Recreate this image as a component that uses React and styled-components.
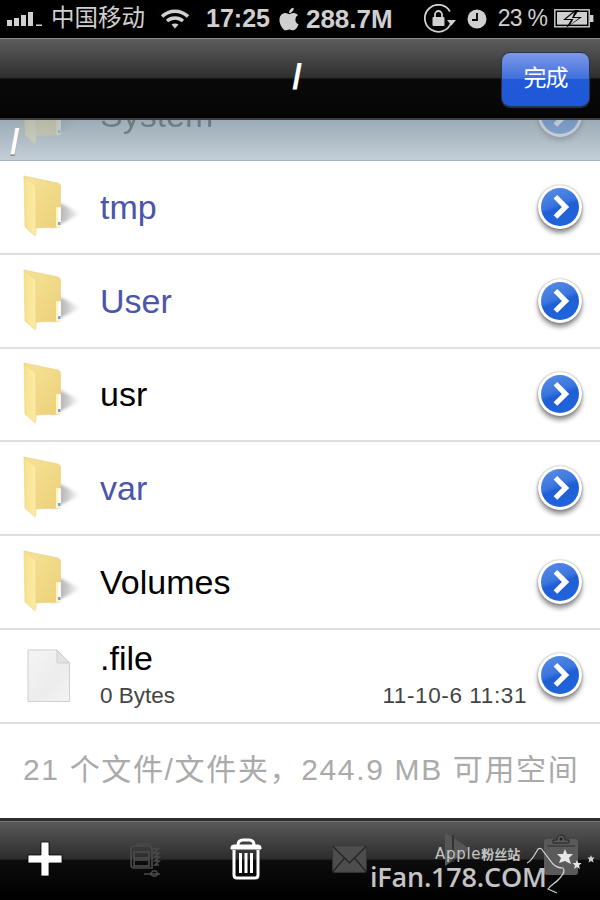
import React from 'react';
import styled, { createGlobalStyle } from 'styled-components';
import { FaApple } from 'react-icons/fa';

const Global = createGlobalStyle`
  html, body { margin: 0; padding: 0; width: 600px; height: 900px; overflow: hidden; background: #fff; }
  * { box-sizing: border-box; }
`;
const Sans = `"Liberation Sans", "Noto Sans CJK SC", sans-serif`;

const Screen = styled.div`
  width: 600px; height: 900px; display: flex; flex-direction: column; overflow: hidden; font-family: ${Sans}; position: relative;
`;
const StatusBar = styled.div`
  height: 38px; flex: none; background: #000; color: #cfcfcf; display: flex; align-items: center; padding-bottom: 1px;
`;
const StatusItem = styled.div`
  margin-left: ${p => p.$ml}px; display: flex; align-items: center; flex: none;
  font-size: ${p => p.$size || 26}px; font-weight: ${p => p.$bold ? 700 : 400}; line-height: 1; letter-spacing: ${p => p.$ls || 0}px;
`;
const NavBar = styled.div`
  height: 82px; flex: none; position: relative; display: flex; align-items: center; justify-content: center; z-index: 2;
  border-top: 1px solid #8a8a8a; border-bottom: 2px solid #3c3c3c;
  background: linear-gradient(#5c5c5c 0%, #303030 48%, #262626 49.5%, #090909 50.5%, #050505 100%);
`;
const NavTitle = styled.div`
  color: #fff; font-size: 35px; font-weight: 700; margin-top: -5px; margin-left: -6px; line-height: 1;
`;
const DoneButton = styled.div`
  position: absolute; left: 501px; top: 13px; width: 89px; height: 55px; border-radius: 9px; color: #fff; font-size: 23px;
  display: flex; align-items: center; justify-content: center; letter-spacing: -1px; padding-bottom: 7px;
  border: 1px solid #28324a; box-shadow: 0 1px 0 rgba(255,255,255,.18);
  background: linear-gradient(#7d9ae8 0%, #3f6edb 49%, #1f5ad8 50%, #2058d6 100%);
`;
const PathBar = styled.div`
  height: 41px; flex: none; position: relative; overflow: hidden;
  background: linear-gradient(#9cacb6, #c4ced6);
  border-bottom: 1px solid #aab4bd;
`;
const Ghost = styled.div`
  position: absolute; left: 0; right: 0; top: -52px; height: 94px; opacity: .3;
  display: flex; align-items: center;
`;
const PathLabel = styled.div`
  position: absolute; left: 10px; top: 4px; color: #fff; font-size: 35px; font-weight: 700; line-height: 1;
  text-shadow: 0 1px 0 #555;
`;
const List = styled.div`display: flex; flex-direction: column; flex: none;`;
const Row = styled.div`
  height: 93.75px; flex: none; display: flex; align-items: center; position: relative; border-bottom: 2px solid #dedede; background: #fff;
`;
const IconBox = styled.div`
  width: 100px; flex: none; display: flex; align-items: center; padding-left: ${p => p.$pl || 22}px;
`;
const Name = styled.div`
  flex: 1; font-size: 34px; line-height: 1; color: ${p => p.$link ? '#4a55ab' : '#000'};
`;
const FileName = styled(Name)`
  flex: none;
`;
const FileInfo = styled.div`
  flex: 1; display: flex; flex-direction: column; height: 100%; padding-top: 11px; padding-right: 11px;
`;
const FileMeta = styled.div`
  display: flex; justify-content: space-between; margin-top: 10px; font-size: 22.5px; line-height: 1; color: #444;
`;
const DateText = styled.span`letter-spacing: .6px;`;
const Disclosure = styled.div`
  width: 44px; height: 44px; border-radius: 50%; flex: none; margin-right: 18px; margin-bottom: ${p => p.$mb || 0}px;
  background: #fff; padding: 3px; box-shadow: 0 4px 5px rgba(0,0,0,.45), 0 0 2px rgba(0,0,0,.4);
`;
const DisclosureInner = styled.div`
  width: 38px; height: 38px; border-radius: 50%; display: flex; align-items: center; justify-content: center;
  background: linear-gradient(160deg, #5b8de6 0%, #3b76de 42%, #1f5fd6 52%, #2066dc 100%);
`;
const Footer = styled.div`
  flex: none; height: 94px; display: flex; align-items: center; padding-left: 23px; color: #aaa; font-size: 30px; letter-spacing: 1.65px; white-space: nowrap; background: #fff; padding-bottom: 8px;
`;
const Toolbar = styled.div`
  flex: 1; position: relative; display: flex; align-items: center; padding-bottom: 2px;
  border-top: 3px solid #2e2e2e; box-shadow: inset 0 1px 0 #777;
  background: linear-gradient(#5b5b5b 0%, #2c2c2c 48%, #0c0c0c 50%, #000 100%);
`;
const Tool = styled.div`
  margin-left: ${p => p.$ml}px; flex: none; display: flex; margin-top: ${p => p.$mt || 0}px;
`;
const Watermark = styled.div`
  position: absolute; left: 370px; top: 25px; width: 230px; height: 55px; color: #c4c4c4; pointer-events: none;
`;
const MarkTop = styled.div`
  position: absolute; left: 65px; top: 0; font-family: "DejaVu Sans", "Noto Sans CJK SC", sans-serif; font-size: 15px; line-height: 17px; white-space: nowrap; letter-spacing: .7px;
`;
const MarkTopCjk = styled.span`font-size: 13px; font-weight: 700; letter-spacing: 0;`;
const MarkMain = styled.div`
  position: absolute; left: 0; top: 15px; font-family: "Open Sans", sans-serif; font-weight: 600; font-size: 27px; line-height: 1.2; white-space: nowrap; letter-spacing: -.2px;
`;
const MarkDeco = styled.svg`position: absolute; left: 130px; top: -2px;`;

const Signal = () => (
  <svg width="36" height="14" viewBox="0 0 36 14" fill="#d0d0d0">
    <rect x="0" y="8" width="5" height="6" /><rect x="7" y="6" width="5" height="8" /><rect x="14" y="3" width="5" height="11" /><rect x="21" y="0" width="5" height="14" /><rect x="29" y="12.5" width="6" height="1.5" />
  </svg>
);
const Wifi = () => (
  <svg width="30" height="21" viewBox="0 0 30 21" fill="none" stroke="#d0d0d0" strokeWidth="3.4">
    <path d="M2 8.5 C9.5 1.5 20.5 1.5 28 8.5" /><path d="M7 13 C11.5 9 18.5 9 23 13" />
    <path d="M11.5 16.6 L15 20.5 L18.5 16.6 C16.5 15 13.5 15 11.5 16.6Z" fill="#d0d0d0" stroke="none" />
  </svg>
);
const RotLock = () => (
  <svg width="33" height="30" viewBox="0 0 33 30" fill="none" stroke="#d0d0d0">
    <path d="M27 19 A13.5 13.5 0 1 1 26 7.5" strokeWidth="1.8" />
    <path d="M23 16 L32 16 L27.5 21.5Z" fill="#d0d0d0" stroke="none" />
    <path d="M11 13 V10.5 A3.5 3.5 0 0 1 18 10.5 V13" strokeWidth="1.8" />
    <rect x="8.5" y="13" width="12" height="9" rx="1" fill="#d0d0d0" stroke="none" />
  </svg>
);
const ClockIcon = () => (
  <svg width="20" height="20" viewBox="0 0 20 20">
    <circle cx="10" cy="10" r="9.5" fill="#d0d0d0" />
    <path d="M10 4 V11 H5" fill="none" stroke="#000" strokeWidth="1.8" />
  </svg>
);
const Battery = () => (
  <svg width="40" height="20" viewBox="0 0 40 20">
    <rect x=".8" y=".8" width="34.4" height="17" fill="none" stroke="#d0d0d0" strokeWidth="1.4" />
    <rect x="3" y="3" width="30" height="12.6" fill="#cfcfcf" />
    <rect x="36" y="6" width="3.4" height="7" fill="#d0d0d0" />
    <path d="M21 1 L9 11 H17 L12 19 L28 8 H20 L25 1Z" fill="#000" />
    <path d="M20.5 3 L12 10 H19.5 L16 16 L25 9 H18 Z" fill="#d0d0d0" />
  </svg>
);
const Folder = () => (
  <svg width="60" height="64" viewBox="0 0 60 64">
    <defs>
      <linearGradient id="fb" x1="0" y1="0" x2="1" y2="1"><stop offset="0" stopColor="#f6e39a" /><stop offset="1" stopColor="#ecd077" /></linearGradient>
      <linearGradient id="ff" x1="0" y1="0" x2="1" y2="0"><stop offset="0" stopColor="#f7e189" /><stop offset="1" stopColor="#fbeca8" /></linearGradient>
      <linearGradient id="fs" x1="0" y1="0" x2="1" y2="0"><stop offset="0" stopColor="#666" stopOpacity=".7" /><stop offset=".55" stopColor="#888" stopOpacity=".42" /><stop offset="1" stopColor="#aaa" stopOpacity="0" /></linearGradient>
      <filter id="fblur" x="-30%" y="-30%" width="160%" height="160%"><feGaussianBlur stdDeviation="1.6" /></filter>
    </defs>
    <path d="M30 53 L38 28 L59 39 Z" fill="url(#fs)" filter="url(#fblur)" />
    <path d="M2 1 L36 8 Q38.5 9 38.5 11 V52 L14 53 Z" fill="url(#fb)" stroke="#e6cf85" strokeWidth=".6" />
    <rect x="34" y="32" width="5" height="20" fill="#fdf3c4" />
    <rect x="36" y="33" width="2.5" height="14" fill="#fff" />
    <rect x="36" y="47" width="2.5" height="3" fill="#6ea6d8" />
    <path d="M2 1 L13 10 Q14 11 14 13 V58 L13 61 L3 52 Z" fill="url(#ff)" stroke="#e9d182" strokeWidth=".6" />
  </svg>
);
const Chevron = () => (
  <svg width="22" height="26" viewBox="0 0 22 26">
    <path d="M4 4 L8 0 L21 13 L8 26 L4 22 L13 13Z" transform="scale(.92) translate(1 1)" fill="#fff" />
  </svg>
);
const FileIcon = () => (
  <svg width="44" height="54" viewBox="0 0 44 54">
    <defs><linearGradient id="pg" x1="0" y1="0" x2="1" y2="1"><stop offset="0" stopColor="#f5f5f5" /><stop offset=".6" stopColor="#ececec" /><stop offset="1" stopColor="#f4f4f4" /></linearGradient></defs>
    <path d="M1 1 H30 L42.5 14 V52.5 H1Z" fill="url(#pg)" stroke="#cfcfcf" />
    <path d="M30 1 V14 H42.5Z" fill="#e2e2e2" stroke="#cfcfcf" />
  </svg>
);

const Plus = () => (
  <svg width="36" height="36" viewBox="0 0 36 36"><path d="M14 1 H22 V14 H35 V22 H22 V35 H14 V22 H1 V14 H14Z" fill="#fff" stroke="#000" strokeWidth=".8" /></svg>
);
const ArchiveIcon = () => (
  <svg width="34" height="36" viewBox="0 0 34 36" fill="none" stroke="#4a4a4a" strokeWidth="1.7">
    <path d="M3 8 Q3 5 7 5 H21 Q24 5 24 8 V27 H6 Q3 27 3 24Z" />
    <rect x="6" y="11" width="15" height="6" /><rect x="6" y="19" width="15" height="6" />
    <path d="M8 3 H24 M25 8 H30 L26 12 H31 L27 16 H31 L27 20 H31 L27 24 H31" />
    <path d="M16 33 H32 M22 33 L25 30 H28 L30 33 L28 35 H25 Z" strokeWidth="1.4" />
  </svg>
);
const Trash = () => (
  <svg width="32" height="42" viewBox="0 0 32 42" fill="none" stroke="#fff">
    <path d="M8 7 Q8 2 13 2 H19 Q24 2 24 7" strokeWidth="3" />
    <path d="M1 9.5 Q1 7 4 7 H28 Q31 7 31 9.5 V11 H1Z" fill="#fff" strokeWidth="1" />
    <path d="M4 12 V37 Q4 40 7 40 H25 Q28 40 28 37 V12" strokeWidth="3" />
    <path d="M10.5 15 V35 M16 15 V35 M21.5 15 V35" strokeWidth="3" />
  </svg>
);
const Mail = () => (
  <svg width="35" height="28" viewBox="0 0 35 28">
    <rect x=".7" y=".7" width="33.6" height="26.6" rx="1.5" fill="#4d4d4d" stroke="#393939" />
    <path d="M1 1.5 L17.5 18 L34 1.5 M1 26.5 L12.5 13 M34 26.5 L22.5 13" fill="none" stroke="#222" strokeWidth="1.2" />
  </svg>
);
const Speaker = () => (
  <svg width="28" height="36" viewBox="0 0 28 36">
    <path d="M2 1 L27 18 L2 35Z" fill="#565656" />
    <path d="M10 4 L10 31" stroke="#333" strokeWidth="2" />
  </svg>
);
const Clipboard = () => (
  <svg width="36" height="42" viewBox="0 0 36 42">
    <rect x="1" y="5" width="34" height="36" rx="3" fill="#5a5a5a" />
    <path d="M10 9 V6 H14 Q14 1 18 1 Q22 1 22 6 H26 V9Z" fill="#5a5a5a" stroke="#222" strokeWidth="1" />
    <circle cx="18" cy="5" r="1.5" fill="#222" />
    <rect x="4" y="11" width="28" height="2" fill="#444" />
  </svg>
);

const rows = [
  { name: 'tmp', link: true },
  { name: 'User', link: true },
  { name: 'usr' },
  { name: 'var', link: true },
  { name: 'Volumes' },
];
const More = ({ mb }) => (
  <Disclosure $mb={mb}>
    <DisclosureInner><Chevron /></DisclosureInner>
  </Disclosure>
);

export default function App() {
  return (
    <Screen>
      <Global />
      <StatusBar>
        <StatusItem $ml={7}><Signal /></StatusItem>
        <StatusItem $ml={8} $size={23.5}>中国移动</StatusItem>
        <StatusItem $ml={15}><Wifi /></StatusItem>
        <StatusItem $ml={16} $bold $size={25}>17:25</StatusItem>
        <StatusItem $ml={6}><FaApple size={26} /></StatusItem>
        <StatusItem $ml={4} $bold>288.7M</StatusItem>
        <StatusItem $ml={31}><RotLock /></StatusItem>
        <StatusItem $ml={10}><ClockIcon /></StatusItem>
        <StatusItem $ml={11} $size={23} $ls={-.7}>23 %</StatusItem>
        <StatusItem $ml={7}><Battery /></StatusItem>
      </StatusBar>
      <NavBar>
        <NavTitle>/</NavTitle>
        <DoneButton>完成</DoneButton>
      </NavBar>
      <PathBar>
        <Ghost>
          <IconBox><Folder /></IconBox>
          <Name>System</Name>
          <More />
        </Ghost>
        <PathLabel>/</PathLabel>
      </PathBar>
      <List>
        {rows.map(r => (
          <Row key={r.name}>
            <IconBox><Folder /></IconBox>
            <Name $link={r.link}>{r.name}</Name>
            <More />
          </Row>
        ))}
        <Row>
          <IconBox $pl={27}><FileIcon /></IconBox>
          <FileInfo>
            <FileName>.file</FileName>
            <FileMeta><span>0 Bytes</span><DateText>11-10-6 11:31</DateText></FileMeta>
          </FileInfo>
          <More mb={2} />
        </Row>
      </List>
      <Footer>21 个文件/文件夹，244.9 MB 可用空间</Footer>
      <Toolbar>
        <Tool $ml={27}><Plus /></Tool>
        <Tool $ml={65}><ArchiveIcon /></Tool>
        <Tool $ml={68}><Trash /></Tool>
        <Tool $ml={70}><Mail /></Tool>
        <Tool $ml={76} $mt={-20}><Speaker /></Tool>
        <Tool $ml={72} $mt={-8}><Clipboard /></Tool>
        <Watermark>
          <MarkTop>Apple<MarkTopCjk>粉丝站</MarkTopCjk></MarkTop>
          <MarkDeco width="100" height="58" viewBox="0 0 100 58" fill="none" stroke="#d4d4d4" strokeWidth="1.2">
            <path d="M27 19 C32 17 35 10 38 5 Q41 3 43 7 L53 20 C57 24 60 24 63 24 C66 28 62 31 60 34 C55 40 50 41 48 45 L57 49" />
            <path d="M65 5 L67 10 L73 10 L69 14 L71 20 L65 17 L59 19 L61 14 L57 10 L63 10Z" fill="#e6e6e6" stroke="none" />
            <path d="M77 16 L78.2 19 L81.5 19 L79 21.5 L80 25 L77 23 L74 25 L75 21.5 L72.5 19 L75.8 19Z" fill="#e6e6e6" stroke="none" />
            <path d="M91 11 L92 13.5 L94.5 13.5 L92.8 15.5 L93.5 18.5 L91 17 L88.5 18.5 L89.2 15.5 L87.5 13.5 L90 13.5Z" fill="#d0d0d0" stroke="none" />
          </MarkDeco>
          <MarkMain>iFan.178.COM</MarkMain>
        </Watermark>
      </Toolbar>
    </Screen>
  );
}
